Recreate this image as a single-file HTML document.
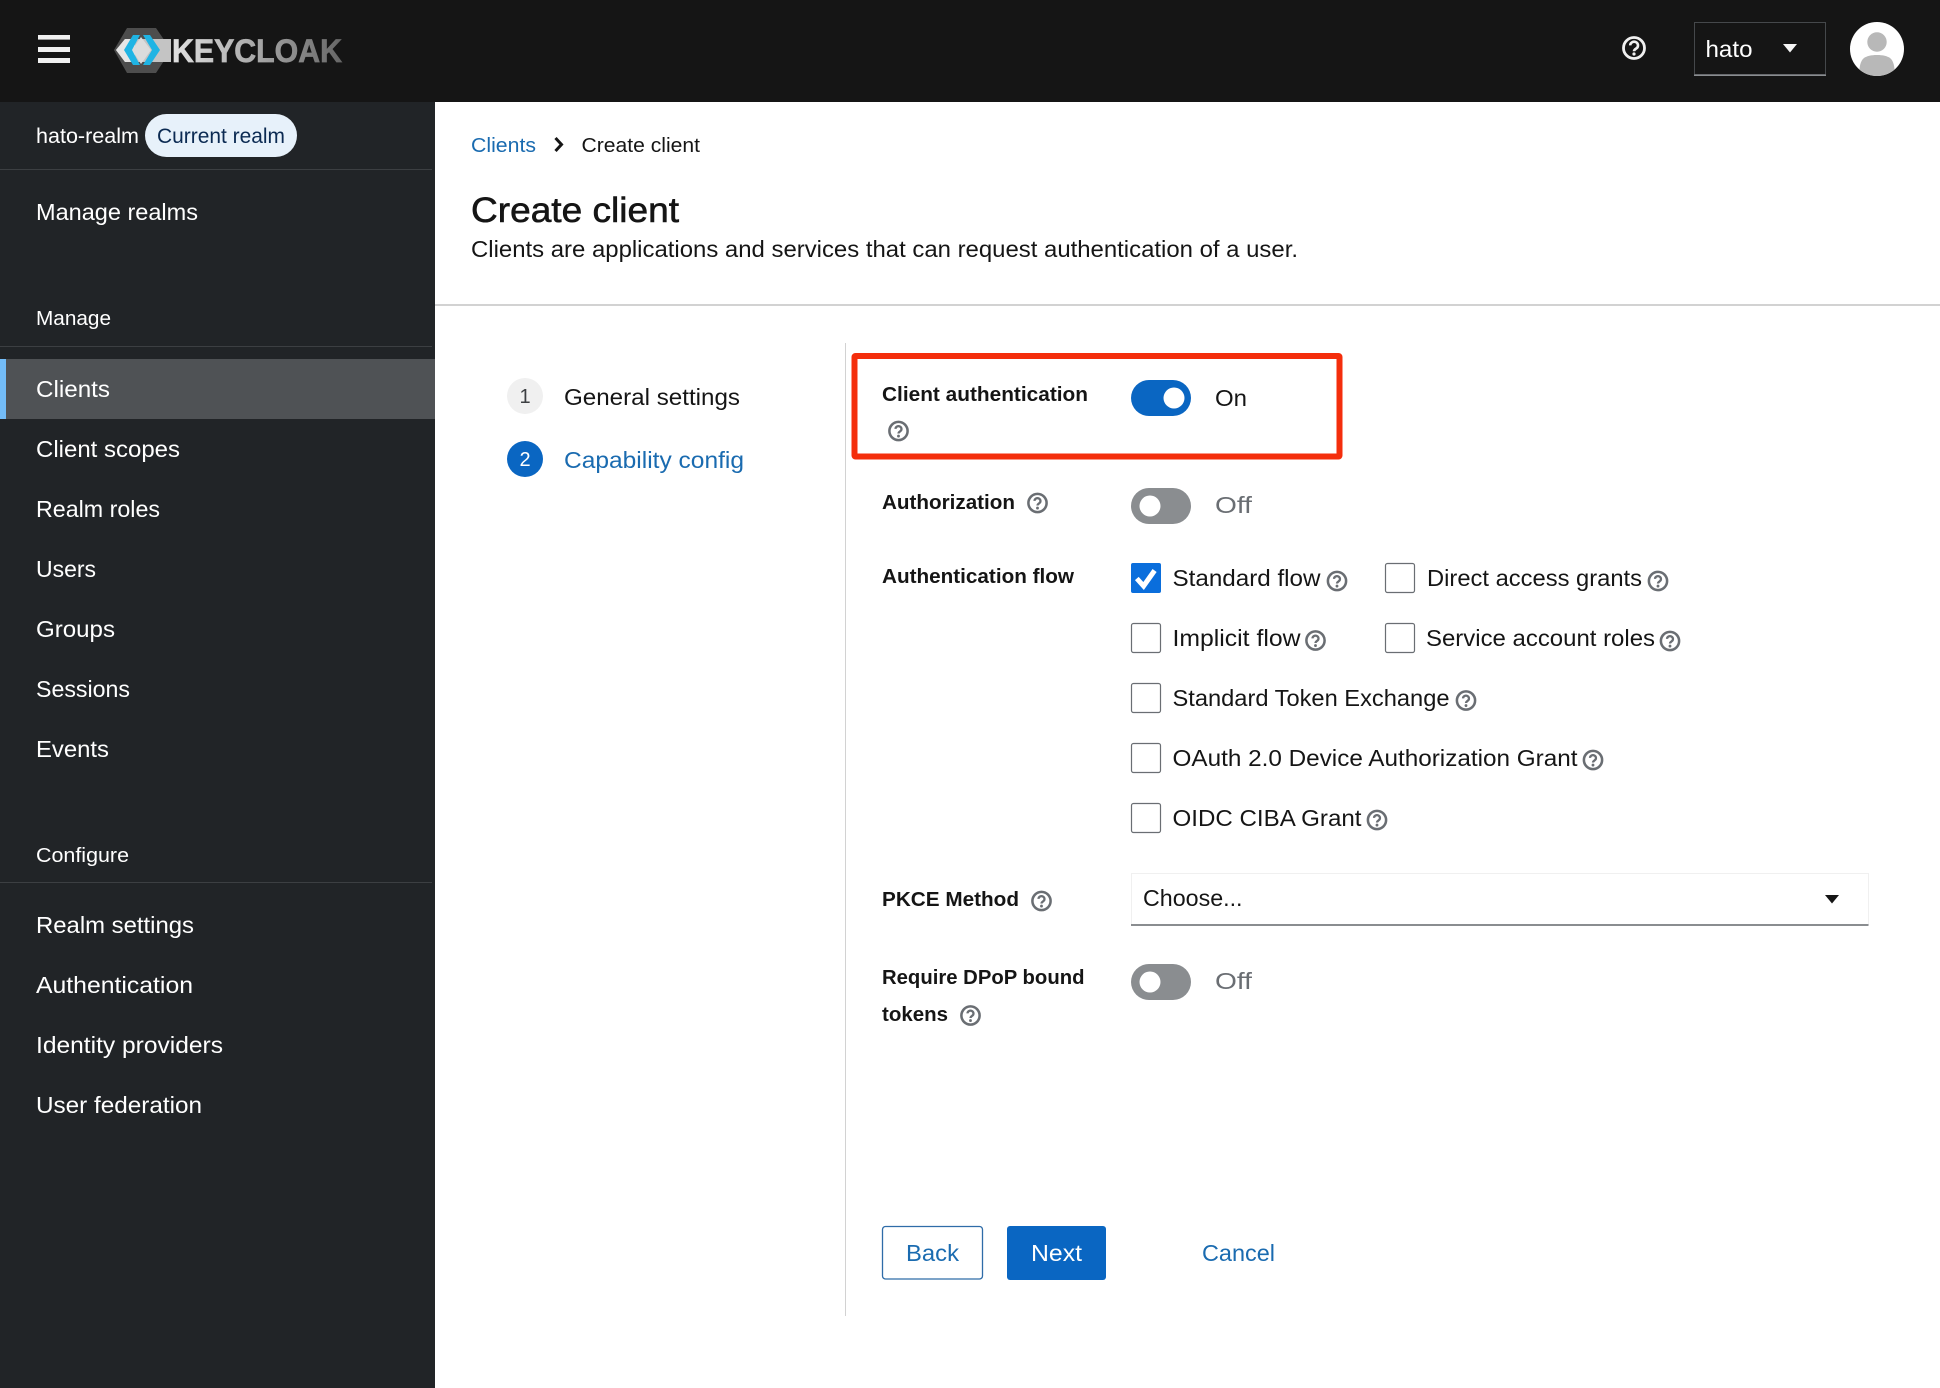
<!DOCTYPE html>
<html lang="en">
<head>
<meta charset="utf-8">
<title>Create client - Keycloak</title>
<style>
html,body{margin:0;padding:0;background:#fff;width:1940px;height:1388px;overflow:hidden}
svg{display:block}
text{font-family:"Liberation Sans",Arial,sans-serif;font-size:23px;fill:#151515}
.s text,text.w{fill:#fff}
.b{font-weight:700;font-size:20px}
.l{fill:#1a6bb0}
.m{font-size:20px}
.g{fill:#6a6e73}
</style>
</head>
<body>
<svg width="1940" height="1388" viewBox="0 0 1940 1388" xmlns="http://www.w3.org/2000/svg">
<defs>
<linearGradient id="kc" x1="171" x2="342" y1="0" y2="0" gradientUnits="userSpaceOnUse">
<stop offset="0" stop-color="#e2e2e2"/><stop offset=".5" stop-color="#a8a8a8"/><stop offset="1" stop-color="#666"/>
</linearGradient>
<symbol id="h" viewBox="0 0 24 24">
<circle cx="12" cy="12" r="10.4" fill="none" stroke="#6a6e73" stroke-width="2.9"/>
<path d="M8.6 9.6a3.4 3.2 0 1 1 5.3 2.7c-1.2.8-1.9 1.3-1.9 2.6" fill="none" stroke="#6a6e73" stroke-width="2.6"/>
<circle cx="12" cy="17.8" r="1.6" fill="#6a6e73"/>
</symbol>
</defs>

<rect width="1940" height="1388" fill="#fff"/>
<rect x="0" y="0" width="1940" height="102" fill="#151515"/>
<rect x="0" y="102" width="435" height="1286" fill="#212427"/>

<!-- header -->
<g fill="#f0f0f0">
<rect x="38" y="35" width="32" height="4.6"/>
<rect x="38" y="47" width="32" height="5"/>
<rect x="38" y="58" width="32" height="5"/>
</g>
<polygon points="127,28 156,28 171,50 156,73 127,73 114,50" fill="#4d4d4d"/>
<polygon points="116,50 125,39 171,39 171,62 125,62" fill="#c4c4c4"/>
<polygon points="116,50 125,39 135,39 135,62 125,62" fill="#e6e6e6"/>
<polygon points="132,50 141,37 151,50 141,64" fill="#dcdcdc"/>
<polygon points="124,50 133,35 140,35 132,50 140,65 133,65" fill="#1fb4e4"/>
<polygon points="160,50 150,35 143,35 152,50 143,65 150,65" fill="#1fb4e4"/>
<text x="172" y="62" style="font-size:32px;font-weight:700;fill:url(#kc);stroke:url(#kc);stroke-width:.7" textLength="170" lengthAdjust="spacingAndGlyphs">KEYCLOAK</text>

<circle cx="1634" cy="48" r="10.5" fill="none" stroke="#f0f0f0" stroke-width="2.8"/>
<path d="M1630.2 45.4a3.9 3.7 0 1 1 6 3.1c-1.4.9-2.2 1.5-2.2 2.8" fill="none" stroke="#f0f0f0" stroke-width="2.6"/>
<circle cx="1634" cy="54" r="1.6" fill="#f0f0f0"/>

<rect x="1694.5" y="22.5" width="131" height="52" fill="none" stroke="#45484b"/>
<rect x="1694" y="74.5" width="132" height="1.5" fill="#8a8d90"/>
<text class="w" x="1705.5" y="57" textLength="47" lengthAdjust="spacingAndGlyphs">hato</text>
<polygon points="1783,44 1797,44 1790,52.5" fill="#f5f5f5"/>

<circle cx="1877" cy="49" r="27" fill="#fff"/>
<clipPath id="av"><circle cx="1877" cy="49" r="27"/></clipPath>
<g clip-path="url(#av)" fill="#b8b8b8">
<circle cx="1877" cy="42" r="9.7"/>
<path d="M1859 80c0-12 1-19 5-22 3-2 7-3 13-3s10 1 13 3c4 3 5 10 5 22z"/>
</g>

<!-- sidebar -->
<g class="s">
<text x="36" y="143" style="font-size:21px" textLength="103" lengthAdjust="spacingAndGlyphs">hato-realm</text>
<rect x="145" y="114" width="152" height="43" rx="21.5" fill="#e7f1fa"/>
<text x="157" y="143" style="font-size:21px;fill:#0b2a52" textLength="128" lengthAdjust="spacingAndGlyphs">Current realm</text>
<rect x="0" y="169" width="432" height="1" fill="#3c3f42"/>
<text x="36" y="220" textLength="162" lengthAdjust="spacingAndGlyphs">Manage realms</text>
<text x="36" y="325" class="m" textLength="75" lengthAdjust="spacingAndGlyphs">Manage</text>
<rect x="0" y="346" width="432" height="1" fill="#3c3f42"/>
<rect x="0" y="359" width="435" height="60" fill="#4f5255"/>
<rect x="0" y="359" width="6" height="60" fill="#73bcf7"/>
<text x="36" y="397" textLength="74" lengthAdjust="spacingAndGlyphs">Clients</text>
<text x="36" y="457" textLength="144" lengthAdjust="spacingAndGlyphs">Client scopes</text>
<text x="36" y="517" textLength="124" lengthAdjust="spacingAndGlyphs">Realm roles</text>
<text x="36" y="577" textLength="60" lengthAdjust="spacingAndGlyphs">Users</text>
<text x="36" y="637" textLength="79" lengthAdjust="spacingAndGlyphs">Groups</text>
<text x="36" y="697" textLength="94" lengthAdjust="spacingAndGlyphs">Sessions</text>
<text x="36" y="757" textLength="73" lengthAdjust="spacingAndGlyphs">Events</text>
<text x="36" y="862" class="m" textLength="93" lengthAdjust="spacingAndGlyphs">Configure</text>
<rect x="0" y="882" width="432" height="1" fill="#3c3f42"/>
<text x="36" y="933" textLength="158" lengthAdjust="spacingAndGlyphs">Realm settings</text>
<text x="36" y="993" textLength="157" lengthAdjust="spacingAndGlyphs">Authentication</text>
<text x="36" y="1053" textLength="187" lengthAdjust="spacingAndGlyphs">Identity providers</text>
<text x="36" y="1113" textLength="166" lengthAdjust="spacingAndGlyphs">User federation</text>
</g>

<!-- page header -->
<text x="471" y="152" class="m l" textLength="65" lengthAdjust="spacingAndGlyphs">Clients</text>
<path d="M555.500 138l6 6.500-6 6.500" fill="none" stroke="#151515" stroke-width="3"/>
<text x="581.500" y="152" class="m" textLength="118.500" lengthAdjust="spacingAndGlyphs">Create client</text>
<text x="471" y="222" style="font-size:35px;stroke:#151515;stroke-width:.6" textLength="208" lengthAdjust="spacingAndGlyphs">Create client</text>
<text x="471" y="257" textLength="827" lengthAdjust="spacingAndGlyphs">Clients are applications and services that can request authentication of a user.</text>
<rect x="435" y="304" width="1505" height="2" fill="#d2d2d2"/>

<!-- stepper -->
<circle cx="525" cy="396" r="18" fill="#f0f0f0"/>
<text x="525" y="403" text-anchor="middle" style="font-size:20px;fill:#3c3f42">1</text>
<text x="564" y="405" textLength="176" lengthAdjust="spacingAndGlyphs">General settings</text>
<circle cx="525" cy="459" r="18" fill="#0a66c2"/>
<text x="525" y="466" text-anchor="middle" style="font-size:20px;fill:#fff">2</text>
<text x="564" y="468" class="l" textLength="180" lengthAdjust="spacingAndGlyphs">Capability config</text>
<rect x="845" y="343" width="1" height="973" fill="#d2d2d2"/>

<!-- highlight -->
<rect x="854.500" y="356" width="485" height="100.500" rx="1" fill="none" stroke="#f42e0c" stroke-width="6"/>

<!-- form -->
<text x="882" y="401" class="b" textLength="206" lengthAdjust="spacingAndGlyphs">Client authentication</text>
<use href="#h" x="888" y="420.500" width="21" height="21"/>
<rect x="1131" y="380" width="60" height="36" rx="18" fill="#0a66c2"/>
<circle cx="1174" cy="398" r="10.500" fill="#fff"/>
<text x="1215" y="406" textLength="32" lengthAdjust="spacingAndGlyphs">On</text>

<text x="882" y="509" class="b" textLength="133" lengthAdjust="spacingAndGlyphs">Authorization</text>
<use href="#h" x="1027" y="492.500" width="21" height="21"/>
<rect x="1131" y="488" width="60" height="36" rx="18" fill="#8a8d90"/>
<circle cx="1150" cy="506" r="10.500" fill="#fff"/>
<text x="1215" y="513" class="g" textLength="37" lengthAdjust="spacingAndGlyphs">Off</text>

<text x="882" y="583" class="b" textLength="192" lengthAdjust="spacingAndGlyphs">Authentication flow</text>

<rect x="1131" y="563" width="30" height="30" rx="2" fill="#0a6edc"/>
<path d="M1136.800 578.500l6.800 7.500 11-15.500" fill="none" stroke="#fff" stroke-width="5"/>
<text x="1172.500" y="586" textLength="148" lengthAdjust="spacingAndGlyphs">Standard flow</text>
<use href="#h" x="1326.500" y="570.500" width="21" height="21"/>
<rect x="1385.500" y="563.500" width="29" height="29" rx="2" fill="#fff" stroke="#6a6e73" stroke-width="1.200"/>
<text x="1427" y="586" textLength="215" lengthAdjust="spacingAndGlyphs">Direct access grants</text>
<use href="#h" x="1647.500" y="570.500" width="21" height="21"/>

<rect x="1131.500" y="623.500" width="29" height="29" rx="2" fill="#fff" stroke="#6a6e73" stroke-width="1.200"/>
<text x="1172.500" y="646" textLength="128" lengthAdjust="spacingAndGlyphs">Implicit flow</text>
<use href="#h" x="1305" y="630" width="21" height="21"/>
<rect x="1385.500" y="623.500" width="29" height="29" rx="2" fill="#fff" stroke="#6a6e73" stroke-width="1.200"/>
<text x="1426" y="646" textLength="229" lengthAdjust="spacingAndGlyphs">Service account roles</text>
<use href="#h" x="1659.500" y="630.500" width="21" height="21"/>

<rect x="1131.500" y="683.500" width="29" height="29" rx="2" fill="#fff" stroke="#6a6e73" stroke-width="1.200"/>
<text x="1172.500" y="706" textLength="277" lengthAdjust="spacingAndGlyphs">Standard Token Exchange</text>
<use href="#h" x="1455.500" y="690" width="21" height="21"/>

<rect x="1131.500" y="743.500" width="29" height="29" rx="2" fill="#fff" stroke="#6a6e73" stroke-width="1.200"/>
<text x="1172.500" y="766" textLength="405" lengthAdjust="spacingAndGlyphs">OAuth 2.0 Device Authorization Grant</text>
<use href="#h" x="1582.500" y="749.500" width="21" height="21"/>

<rect x="1131.500" y="803.500" width="29" height="29" rx="2" fill="#fff" stroke="#6a6e73" stroke-width="1.200"/>
<text x="1172.500" y="826" textLength="189" lengthAdjust="spacingAndGlyphs">OIDC CIBA Grant</text>
<use href="#h" x="1366.500" y="809.500" width="21" height="21"/>

<text x="882" y="906" class="b" textLength="137" lengthAdjust="spacingAndGlyphs">PKCE Method</text>
<use href="#h" x="1031" y="890.500" width="21" height="21"/>
<rect x="1131.500" y="873.500" width="737" height="51" fill="#fff" stroke="#f0f0f0"/>
<rect x="1131" y="924" width="737.500" height="2" fill="#8a8d90"/>
<text x="1143" y="906" textLength="99.500" lengthAdjust="spacingAndGlyphs">Choose...</text>
<polygon points="1825,895 1839,895 1832,903.500" fill="#151515"/>

<text x="882" y="984" class="b" textLength="202.500" lengthAdjust="spacingAndGlyphs">Require DPoP bound</text>
<text x="882" y="1021" class="b" textLength="66" lengthAdjust="spacingAndGlyphs">tokens</text>
<use href="#h" x="960" y="1005" width="21" height="21"/>
<rect x="1131" y="964" width="60" height="36" rx="18" fill="#8a8d90"/>
<circle cx="1150" cy="982" r="10.500" fill="#fff"/>
<text x="1215" y="989" class="g" textLength="37" lengthAdjust="spacingAndGlyphs">Off</text>

<!-- buttons -->
<rect x="882.500" y="1226.500" width="100" height="52.500" rx="3" fill="#fff" stroke="#2f6ca8" stroke-width="1.300"/>
<text x="906" y="1261" class="l" textLength="53" lengthAdjust="spacingAndGlyphs">Back</text>
<rect x="1007" y="1226" width="99" height="54" rx="3" fill="#0a66c2"/>
<text x="1031" y="1261" class="w" textLength="51" lengthAdjust="spacingAndGlyphs">Next</text>
<text x="1202" y="1261" class="l" textLength="73" lengthAdjust="spacingAndGlyphs">Cancel</text>
</svg>
</body>
</html>
